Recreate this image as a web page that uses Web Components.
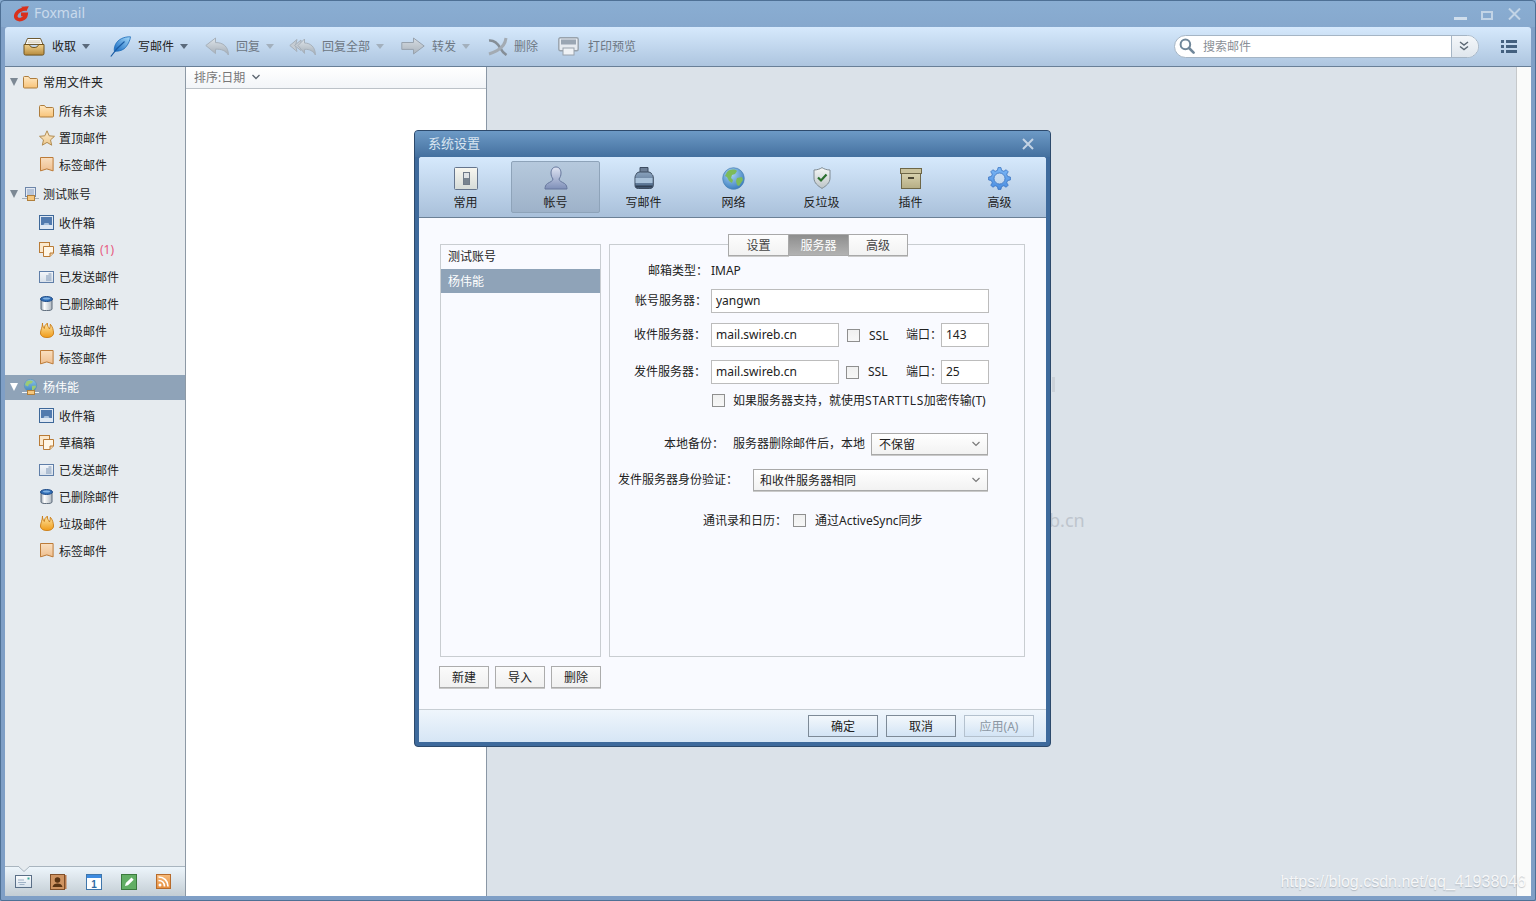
<!DOCTYPE html>
<html lang="zh-CN">
<head>
<meta charset="utf-8">
<title>Foxmail</title>
<style>
  html, body { margin: 0; padding: 0; overflow: hidden; background: #7f9fc6; }
  body { font: 12px "Noto Sans", "Noto Sans CJK SC", sans-serif; color: #222; }
</style>
</head>
<body>

<fm-window>
  <fm-titlebar slot="title">Foxmail</fm-titlebar>

  <fm-toolbar slot="toolbar">
    <fm-tool icon="inbox" caret style="margin-left:18px">收取</fm-tool>
    <fm-tool icon="feather" caret style="margin-left:20px">写邮件</fm-tool>
    <fm-tool icon="reply" caret off style="margin-left:17px">回复</fm-tool>
    <fm-tool icon="replyall" caret off gap="6" style="margin-left:15px">回复全部</fm-tool>
    <fm-tool icon="forward" caret off style="margin-left:17px">转发</fm-tool>
    <fm-tool icon="del" off gap="6" style="margin-left:18px">删除</fm-tool>
    <fm-tool icon="print" off gap="9" style="margin-left:20px">打印预览</fm-tool>
    <fm-search>搜索邮件</fm-search>
  </fm-toolbar>

  <fm-sidebar slot="sidebar">
    <fm-tree-item head icon="folder">常用文件夹</fm-tree-item>
    <fm-tree-item icon="folder">所有未读</fm-tree-item>
    <fm-tree-item icon="star">置顶邮件</fm-tree-item>
    <fm-tree-item icon="tag">标签邮件</fm-tree-item>
    <fm-tree-item head icon="acct">测试账号</fm-tree-item>
    <fm-tree-item icon="inboxb">收件箱</fm-tree-item>
    <fm-tree-item icon="drafts" badge="(1)">草稿箱</fm-tree-item>
    <fm-tree-item icon="sent">已发送邮件</fm-tree-item>
    <fm-tree-item icon="trash">已删除邮件</fm-tree-item>
    <fm-tree-item icon="flame">垃圾邮件</fm-tree-item>
    <fm-tree-item icon="tag">标签邮件</fm-tree-item>
    <fm-tree-item head selected icon="acctglobe">杨伟能</fm-tree-item>
    <fm-tree-item icon="inboxb">收件箱</fm-tree-item>
    <fm-tree-item icon="drafts">草稿箱</fm-tree-item>
    <fm-tree-item icon="sent">已发送邮件</fm-tree-item>
    <fm-tree-item icon="trash">已删除邮件</fm-tree-item>
    <fm-tree-item icon="flame">垃圾邮件</fm-tree-item>
    <fm-tree-item icon="tag">标签邮件</fm-tree-item>
  </fm-sidebar>

  <fm-listpane slot="list">排序:日期</fm-listpane>
  <fm-msgpane slot="msg"></fm-msgpane>

  <fm-dialog slot="overlay" heading="系统设置">
    <fm-settings-tab slot="tabs" icon="switch">常用</fm-settings-tab>
    <fm-settings-tab slot="tabs" icon="person" selected>帐号</fm-settings-tab>
    <fm-settings-tab slot="tabs" icon="ink">写邮件</fm-settings-tab>
    <fm-settings-tab slot="tabs" icon="globe" style="padding-right:0">网络</fm-settings-tab>
    <fm-settings-tab slot="tabs" icon="shield">反垃圾</fm-settings-tab>
    <fm-settings-tab slot="tabs" icon="box">插件</fm-settings-tab>
    <fm-settings-tab slot="tabs" icon="gear">高级</fm-settings-tab>

    <fm-account-list slot="accounts">
      <fm-account>测试账号</fm-account>
      <fm-account selected>杨伟能</fm-account>
    </fm-account-list>

    <fm-button slot="acctbtn">新建</fm-button>
    <fm-button slot="acctbtn">导入</fm-button>
    <fm-button slot="acctbtn">删除</fm-button>

    <fm-panel slot="panel">
      <fm-subtab slot="tabs">设置</fm-subtab>
      <fm-subtab slot="tabs" selected>服务器</fm-subtab>
      <fm-subtab slot="tabs" style="width:60px">高级</fm-subtab>

      <fm-row style="height:22px;margin-top:4px">
        <fm-label style="width:98px">邮箱类型：</fm-label>
        <fm-text style="margin-left:3px">IMAP</fm-text>
      </fm-row>
      <fm-row style="margin-top:7px">
        <fm-label style="width:97px">帐号服务器：</fm-label>
        <fm-input style="margin-left:4px;width:278px">yangwn</fm-input>
      </fm-row>
      <fm-row style="margin-top:10px">
        <fm-label style="width:96px">收件服务器：</fm-label>
        <fm-input style="margin-left:5px;width:128px">mail.swireb.cn</fm-input>
        <fm-check style="margin-left:8px"></fm-check>
        <fm-text style="margin-left:9px;width:37px;padding-bottom:0">SSL</fm-text>
        <fm-text style="width:35px">端口：</fm-text>
        <fm-input style="width:48px">143</fm-input>
      </fm-row>
      <fm-row style="margin-top:13px">
        <fm-label style="width:96px">发件服务器：</fm-label>
        <fm-input style="margin-left:5px;width:128px">mail.swireb.cn</fm-input>
        <fm-check style="margin-left:7px"></fm-check>
        <fm-text style="margin-left:9px;width:38px">SSL</fm-text>
        <fm-text style="width:35px">端口：</fm-text>
        <fm-input style="width:48px">25</fm-input>
      </fm-row>
      <fm-row style="height:19px;margin-top:7px;padding-left:102px">
        <fm-check></fm-check>
        <fm-text style="margin-left:8px">如果服务器支持，就使用<span style="letter-spacing:.6px">STARTTLS</span>加密传输(T)</fm-text>
      </fm-row>
      <fm-row style="height:22px;margin-top:23px">
        <fm-label style="width:114px">本地备份：</fm-label>
        <fm-text style="margin-left:9px">服务器删除邮件后，本地</fm-text>
        <fm-select style="margin-left:6px;width:117px">不保留</fm-select>
      </fm-row>
      <fm-row style="height:22px;margin-top:14px;padding-left:8px">
        <fm-text>发件服务器身份验证：</fm-text>
        <fm-select style="margin-left:15px;width:235px;padding-left:6px">和收件服务器相同</fm-select>
      </fm-row>
      <fm-row style="height:21px;margin-top:19px;padding-left:93px">
        <fm-text>通讯录和日历：</fm-text>
        <fm-check style="margin-left:6px"></fm-check>
        <fm-text style="margin-left:9px">通过ActiveSync同步</fm-text>
      </fm-row>
    </fm-panel>

    <fm-button slot="footer" kind="foot">确定</fm-button>
    <fm-button slot="footer" kind="foot">取消</fm-button>
    <fm-button slot="footer" kind="foot" off>应用(A)</fm-button>
  </fm-dialog>

  <fm-watermark slot="overlay">https://blog.csdn.net/qq_41938046</fm-watermark>
</fm-window>

<script>
(function () {

    function gearPath(cx, cy, ro, ri, n) {
        let d = '';
        for (let i = 0; i < n; i++) {
            let a = i / n * Math.PI * 2;
            let s = Math.PI / n;
            let pts = [[ri, a - s * 0.62], [ro, a - s * 0.34], [ro, a + s * 0.34], [ri, a + s * 0.62]];
            pts.forEach(function (p) {
                let x = cx + p[0] * Math.sin(p[1]);
                let y = cy - p[0] * Math.cos(p[1]);
                d += (d ? 'L' : 'M') + x.toFixed(2) + ' ' + y.toFixed(2);
            });
        }
        return d + 'Z';
    }

    function grad(id, a, b) {
        return '<linearGradient id="' + id + '" x1="0" y1="0" x2="0" y2="1"><stop offset="0" stop-color="' + a + '"/><stop offset="1" stop-color="' + b + '"/></linearGradient>';
    }

    // name: [width, height, svg content]
    // gradient ids must differ between icons that end up in the same shadow root
    const ICONS = {
        logo: [16, 16, '<path d="M13.5 2.600C9 3 3.800 5.200 2.800 9.400 2.200 13 5.600 14.200 8.600 13.300 11.400 12.400 12.800 10.600 13.100 8.400H8" fill="none" stroke="#d9301c" stroke-width="3.600"/><path d="M8 .8L15.800 .2 13.500 5z" fill="#d9301c"/>'],
        inbox: [22, 19, '<defs>' + grad('a', '#f2d28e', '#b58a3d') + '</defs><path d="M4.5 1.5h13l2.5 6h-18z" fill="#fff" stroke="#6d5a33"/><path d="M5 4h12M4.5 5.8h13" stroke="#cfc6ae"/><path d="M1 7.5h5.5c.5 2 1.5 3 4.5 3s4-1 4.5-3H21v9a1.6 1.6 0 0 1-1.6 1.6H2.6A1.6 1.6 0 0 1 1 16.5z" fill="url(#a)" stroke="#6f531d"/>'],
        feather: [21, 21, '<defs><linearGradient id="a" x1="1" y1="0" x2="0" y2="1"><stop offset="0" stop-color="#a8dcfb"/><stop offset="1" stop-color="#1468c0"/></linearGradient></defs><path d="M20.5.8C14 .6 8 3.2 5.4 8.6 4.4 10.8 4 13 4.4 15.2 9 15.6 13.8 14 16.4 10.4 18.6 7.4 20 4.2 20.5.8z" fill="url(#a)" stroke="#1c6bb8" stroke-width=".8"/><path d="M.8 20.5C4 16 9 10 14.5 5.5" fill="none" stroke="#1a5ca3" stroke-width="1.2"/>'],
        reply: [24, 19, '<defs>' + grad('a', '#dfe5ea', '#a2acb6') + '</defs><path d="M.8 8.5L10.5 1v4.6C18 5.4 23.4 9.6 23.4 18 20.6 13.6 16.8 12 10.5 12.2v4.4z" fill="url(#a)" stroke="#a6b0ba"/>'],
        replyall: [27, 19, '<defs>' + grad('a', '#dfe5ea', '#a2acb6') + '</defs><path d="M.8 8.5L8 2.5 6.5 8.5 8 14.5z" fill="#c5ccd3" stroke="#a6b0ba"/><path d="M5.5 8.5L12 3v10.5z" fill="#c5ccd3" stroke="#a6b0ba"/><path d="M9 8.5L15.5 2v4C21.5 6 26.4 10 26.4 18 24 14 20.8 12 15.5 12.4v4z" fill="url(#a)" stroke="#a6b0ba"/>'],
        forward: [24, 19, '<defs>' + grad('a', '#d6dce2', '#aab3bc') + '</defs><path d="M.8 5.5H12.5V1L23.2 9 12.5 17v-4.6H.8z" fill="url(#a)" stroke="#98a3ae"/>'],
        del: [20, 19, '<path d="M1 3.5C6 3 10 7 12.2 11 13.4 13.4 15.5 16 18.5 18" fill="none" stroke="#858e97" stroke-width="2.6"/><path d="M18 1C17.4 6 14 11 9 13.6 6.4 15 4 16 1 17" fill="none" stroke="#a3abb3" stroke-width="3"/>'],
        print: [21, 19, '<rect x=".8" y=".8" width="19.4" height="13" rx="1.5" fill="#e6ebf0" stroke="#98a2ac" stroke-width="1.4"/><rect x="3" y="2.5" width="15" height="5" fill="#9aa6b3"/><rect x="5" y="11" width="11" height="7" fill="#eff2f5" stroke="#98a2ac"/>'],
        search: [16, 16, '<circle cx="6.4" cy="6.4" r="4.8" fill="none" stroke="#70879a" stroke-width="2"/><path d="M10 10l4.6 4.6" stroke="#70879a" stroke-width="2.6" stroke-linecap="round"/>'],
        chev2: [10, 10, '<path d="M1 1l4 3 4-3M1 5.5l4 3 4-3" fill="none" stroke="#5b6773" stroke-width="1.4"/>'],
        list: [16, 13, '<path d="M0 0h3v3H0zM5 0h11v3H5zM0 5h3v3H0zM5 5h11v3H5zM0 10h3v3H0zM5 10h11v3H5z" fill="#43607f"/>'],
        folder: [15, 14, '<defs>' + grad('a', '#ffe8c2', '#f8c378') + '</defs><path d="M.5 2.5a1 1 0 0 1 1-1h4l1.5 2h6.5a1 1 0 0 1 1 1v7.5a1 1 0 0 1-1 1h-12a1 1 0 0 1-1-1z" fill="url(#a)" stroke="#ad7d3d"/>'],
        star: [16, 16, '<defs>' + grad('a', '#fbeacb', '#eec98e') + '</defs><path d="M8 .8l2.2 5 5.3.5-4 3.6 1.2 5.3L8 12.4l-4.7 2.8 1.2-5.3-4-3.6 5.3-.5z" fill="url(#a)" stroke="#b18c52"/>'],
        tag: [14, 15, '<defs>' + grad('a', '#f9dfc0', '#efbf8f') + '</defs><path d="M.5.5h12.6v13.4l-6.3-2-6.3 2z" fill="url(#a)" stroke="#bc7b38"/>'],
        acct: [17, 14, '<rect x="3.5" y=".5" width="10" height="9" fill="#e3e9f3" stroke="#6e86a9"/><path d="M5 3h7M5 5h7M5 7h7" stroke="#8aa0bf"/><path d="M0 11.5h17" stroke="#a7b0ba"/><rect x="5.5" y="8.5" width="7" height="5" fill="#f5c77e" stroke="#b07f3c"/>'],
        acctglobe: [17, 16, '<defs>' + grad('a', '#8cc3e8', '#3f83bb') + '</defs><circle cx="8.5" cy="6.500" r="6.200" fill="url(#a)" stroke="#5f8fae" stroke-width=".6"/><path d="M4.500 2.500c2.500-1.500 5-1.500 6.500 0l-1.500 2-2.500.5-1 2.500-3-1.500zM10 7l3.500-.5.5 1.500-2.500 3H10z" fill="#9ccb74"/><path d="M0 13.500h17" stroke="#f2f5f7"/><rect x="5.500" y="11.500" width="7" height="4" fill="#f5c77e" stroke="#b07f3c"/>'],
        inboxb: [15, 15, '<rect x=".5" y=".5" width="14" height="14" fill="#dfe8f3" stroke="#3e6899"/><rect x="2" y="2" width="11" height="8" fill="#517aae"/><path d="M4.500 10l1-2h4l1 2z" fill="#a6c0de"/>'],
        drafts: [15, 15, '<rect x=".5" y=".5" width="10" height="10" fill="#fbe8cc" stroke="#b97b36"/><path d="M4.500 4.500h10v6.500l-3.500 3.500h-6.500z" fill="#fff6e6" stroke="#b97b36"/><path d="M11 14.500V11h3.500" fill="#efd0a2" stroke="#b97b36"/>'],
        sent: [15, 12, '<defs>' + grad('a', '#f3f6fa', '#d7e0ea') + '</defs><rect x=".5" y=".5" width="14" height="11" fill="url(#a)" stroke="#5f7ea8"/><path d="M7 5h5.500M7 7h5.500M7 9h5.500M9.500 3h3" stroke="#7d95b5"/>'],
        trash: [13, 15, '<defs><linearGradient id="a" x1="0" y1="0" x2="1" y2="0"><stop offset="0" stop-color="#9aa6b2"/><stop offset=".3" stop-color="#fff"/><stop offset="1" stop-color="#aeb7c0"/></linearGradient></defs><path d="M1 3v10c0 1 2 1.600 5.500 1.600S12 14 12 13V3z" fill="url(#a)" stroke="#5a6878"/><ellipse cx="6.500" cy="3" rx="6" ry="2.500" fill="#3370b8" stroke="#1f4c88"/><ellipse cx="6.500" cy="2.600" rx="3.500" ry="1" fill="#82b3e3"/>'],
        flame: [14, 15, '<defs>' + grad('a', '#ffe9a8', '#ef9a18') + '</defs><path d="M2.500 0c-.2 2.500.8 4 1.800 5.500C4.500 3.500 5 1.500 7.500.2 7 3 8.500 4 9.500 6c.5-1.500 1-3 .8-4.800C12.500 3.500 13.500 7 13.500 10c0 3-3 4.600-6.500 4.600S.5 13 .5 10C.5 7 2.500 4.500 2.500 0z" fill="url(#a)" stroke="#c97a13" stroke-width=".9"/>'],
        mail: [17, 13, '<defs>' + grad('m', '#fbfdfe', '#d8e2ec') + '</defs><rect x=".5" y=".5" width="16" height="12" fill="url(#m)" stroke="#5a6f87"/><path d="M3 5h6M3 7.500h8M4.500 9.500h5" stroke="#9fb2c6"/><rect x="12.500" y="2.500" width="2" height="2" fill="#3ba89a"/>'],
        contacts: [17, 16, '<rect x="14" y="1" width="2.500" height="14" fill="#b9794a"/><rect x=".5" y=".5" width="14" height="15" fill="#cf9462" stroke="#7f4f2a"/><circle cx="7.500" cy="6" r="2.800" fill="#5a3413"/><path d="M2.500 13c.5-2.500 2.500-3.500 5-3.500s4.500 1 5 3.500z" fill="#5a3413"/>'],
        calendar: [16, 16, '<rect x=".5" y=".5" width="15" height="15" fill="#fdfeff" stroke="#3f76ab"/><rect x="1" y="1" width="14" height="3" fill="#3d8be0"/><text x="8" y="14" font-family="Liberation Sans" font-weight="700" font-size="10" text-anchor="middle" fill="#2c6aa3">1</text>'],
        notes: [16, 16, '<rect x=".5" y=".5" width="15" height="15" fill="#62ae64" stroke="#3b793d"/><path d="M4 12l.8-3 5.700-5.500 2.200 2.200-5.700 5.500z" fill="#fff"/>'],
        rss: [15, 15, '<defs>' + grad('r', '#f7bb7b', '#e48c3c') + '</defs><rect x=".5" y=".5" width="14" height="14" fill="url(#r)" stroke="#b66b2c"/><circle cx="4" cy="11" r="1.500" fill="#fff"/><path d="M2.500 6.500c3.500 0 6 2.500 6 6M2.500 3c5.500 0 9.500 4 9.500 9.500" fill="none" stroke="#fff" stroke-width="1.700"/>'],
        'switch': [24, 23, '<defs>' + grad('a', '#f8f7f0', '#d5dbd8') + '</defs><rect x=".5" y=".5" width="23" height="22" rx="1" fill="url(#a)" stroke="#65758d"/><rect x="9.500" y="5.500" width="6" height="12" fill="#dfe3e6" stroke="#6f7a88"/><rect x="10" y="11" width="5" height="6" fill="#77838f"/>'],
        person: [24, 24, '<defs>' + grad('a', '#dfe4f3', '#7e8fb8') + '</defs><path d="M12 1C8.500 1 7 4 7 7c0 3 1 4.500 2 6 0 2-3 3-5.500 4.500C1.500 18.800 1 21 1 23h22c0-2-.5-4.200-2.500-5.500C18 16 15 15 15 13c1-1.500 2-3 2-6 0-3-1.500-6-5-6z" fill="url(#a)" stroke="#66779c"/>'],
        ink: [20, 24, '<defs>' + grad('a', '#8aa2bd', '#4d6888') + '</defs><path d="M6 1.500h8v5H6z" fill="#6d7f96" stroke="#3d4c60"/><path d="M2.500 8c0-1.500 2-2 4-2h7c2 0 4 .5 4 2 1.300 1 1.800 2 1.800 4v7c0 2.500-1.500 3.500-3.500 3.500H4.500C2.200 22.500 1 21.500 1 19v-7c0-2 .5-3 1.500-4z" fill="url(#a)" stroke="#3d4c60"/><path d="M1.500 12h17v5h-17z" fill="#a9c2da"/><path d="M1.500 20.500h17" stroke="#2f3e52" stroke-width="2"/>'],
        globe: [23, 23, '<defs><radialGradient id="a" cx=".4" cy=".3" r=".8"><stop offset="0" stop-color="#a9d4f5"/><stop offset="1" stop-color="#2f74b8"/></radialGradient></defs><circle cx="11.500" cy="11.500" r="10.800" fill="url(#a)" stroke="#4d84b3" stroke-width=".7"/><path d="M5 5c3-3 8-3 10-1l-2 3-3 1-1 3 2 2-1 3-3-2-2-4-2-1zM15 11l5-1 1 3-4 6-2-1-1-4z" fill="#7dbb5a"/>'],
        shield: [18, 22, '<defs>' + grad('a', '#f6f8f6', '#bcc4c7') + '</defs><path d="M9 .6C7 2 4 3 1 3v8c0 5 4 8 8 10.400 4-2.400 8-5.400 8-10.400V3c-3 0-6-1-8-2.400z" fill="url(#a)" stroke="#7e8a92"/><path d="M5 10.500l3 3 5.500-6" fill="none" stroke="#2b6f2d" stroke-width="2.200"/>'],
        box: [22, 21, '<defs>' + grad('a', '#d8d2ae', '#b5ad84') + '</defs><rect x="1.500" y="5.500" width="19" height="15" fill="url(#a)" stroke="#6e6747"/><rect x=".5" y=".5" width="21" height="5" fill="#c9c29c" stroke="#6e6747"/><rect x="8" y="9" width="6" height="2" fill="#4b4632"/>'],
        gear: [23, 23, '<defs>' + grad('a', '#7db8f6', '#4a8de0') + '</defs><path fill-rule="evenodd" d="' + gearPath(11.5, 11.5, 11, 8.4, 8) + 'M11.500 6a5.500 5.500 0 1 0 0 11 5.500 5.500 0 0 0 0-11z" fill="url(#a)" stroke="#3a73c2" stroke-width=".8"/>']
    };

    function icon(name) {
        let i = ICONS[name];
        return '<svg xmlns="http://www.w3.org/2000/svg" width="' + i[0] + '" height="' + i[1] + '" viewBox="0 0 ' + i[0] + ' ' + i[1] + '" style="display:block;flex:none">' + i[2] + '</svg>';
    }

    class FmWindow extends HTMLElement {
        constructor() {
            super();
            this.attachShadow({ mode: 'open' }).innerHTML = `
            <style>
                :host { display: flex; flex-direction: column; position: relative; width: 1536px; height: 901px;
                    box-sizing: border-box; padding: 0 5px 5px; overflow: hidden;
                    background: linear-gradient(#8aaed3 0, #86a8cd 27px, #7f9fc6 27px); }
                .edge { position: absolute; inset: 0; border: 1px solid #4e7095; border-radius: 4px 4px 2px 2px; pointer-events: none; }
                .main { flex: 1; display: flex; min-height: 0; }
            </style>
            <div class="edge"></div>
            <slot name="title"></slot>
            <slot name="toolbar"></slot>
            <div class="main"><slot name="sidebar"></slot><slot name="list"></slot><slot name="msg"></slot></div>
            <slot name="overlay"></slot>`;
        }
    }

    class FmTitlebar extends HTMLElement {
        constructor() {
            super();
            this.attachShadow({ mode: 'open' }).innerHTML = `
            <style>
                :host { display: flex; align-items: center; height: 27px; margin: 0 -5px; padding: 0 15px 0 13px; box-sizing: border-box;
                    color: #c9daec; font-size: 14px; }
                .t { margin-left: 5px; flex: 1; position: relative; top: -1px; }
                .b { display: flex; align-items: flex-end; gap: 14px; height: 12px; margin-top: 1px; }
            </style>
            ${icon('logo')}
            <div class="t"><slot></slot></div>
            <div class="b">
                <svg width="13" height="12" viewBox="0 0 13 12"><path d="M0 9h13v3H0z" fill="#d0deec"/></svg>
                <svg width="13" height="12" viewBox="0 0 13 12"><path d="M1 4h10v7H1z" fill="none" stroke="#c2d4e6" stroke-width="2"/></svg>
                <svg width="13" height="12" viewBox="0 0 13 12"><path d="M1 .5l11 11M12 .5l-11 11" fill="none" stroke="#c2d4e6" stroke-width="2"/></svg>
            </div>`;
        }
    }

    class FmToolbar extends HTMLElement {
        constructor() {
            super();
            this.attachShadow({ mode: 'open' }).innerHTML = `
            <style>
                :host { display: flex; align-items: center; height: 40px; box-sizing: border-box; padding-bottom: 1px;
                    background: linear-gradient(#d6e9fc, #adc5df); border-bottom: 1px solid #687f97; border-radius: 3px 3px 0 0; }
            </style>
            <slot></slot>`;
        }
    }

    class FmTool extends HTMLElement {
        constructor() {
            super();
            let off = this.hasAttribute('off');
            let gap = this.getAttribute('gap') || 7;
            this.attachShadow({ mode: 'open' }).innerHTML = `
            <style>
                :host { display: flex; align-items: center; color: ${off ? '#6d7783' : '#222'}; flex: none; }
                .l { margin-left: ${gap}px; }
                .c { width: 0; height: 0; margin-left: 6px; margin-top: 1px; border: 4px solid transparent; border-bottom: 0; border-top: 5px solid ${off ? '#a3b0bd' : '#5a6a7c'}; }
            </style>
            ${icon(this.getAttribute('icon'))}
            <span class="l"><slot></slot></span>
            ${this.hasAttribute('caret') ? '<span class="c"></span>' : ''}`;
        }
    }

    class FmSearch extends HTMLElement {
        constructor() {
            super();
            this.attachShadow({ mode: 'open' }).innerHTML = `
            <style>
                :host { display: flex; margin-left: auto; margin-right: 14px; height: 23px; align-items: stretch; }
                .box { display: flex; align-items: stretch; width: 305px; height: 23px; box-sizing: border-box; background: #fff;
                    border: 1px solid #a5b5c5; border-radius: 12px; overflow: hidden; color: #8a8f96; }
                .i { display: flex; align-items: center; padding-left: 4px; }
                .t { flex: 1; padding-left: 8px; line-height: 22px; }
                .d { width: 27px; display: flex; align-items: center; justify-content: center; border-left: 1px solid #a5b5c5;
                    background: linear-gradient(#f4f7fa, #dfe6ed); padding-right: 2px; box-sizing: border-box; }
                .m { align-self: center; margin-left: 22px; }
            </style>
            <div class="box">
                <div class="i">${icon('search')}</div>
                <div class="t"><slot></slot></div>
                <div class="d">${icon('chev2')}</div>
            </div>
            <div class="m">${icon('list')}</div>`;
        }
    }

    class FmSidebar extends HTMLElement {
        constructor() {
            super();
            this.attachShadow({ mode: 'open' }).innerHTML = `
            <style>
                :host { display: flex; flex-direction: column; width: 181px; flex: none; box-sizing: border-box; background: #e6ebef; border-right: 1px solid #8d99a5; }
                .tree { flex: 1; }
                .bottom { position: relative; display: flex; height: 30px; box-sizing: border-box; align-items: center; border-top: 1px solid #a9b5bf;
                    background: linear-gradient(#edf5fb, #c3cdd4); padding-left: 5px; }
                .bottom span { display: flex; justify-content: center; width: 35px; flex: none; margin-left: -4px; margin-right: 4px; }
                .notch { position: absolute; left: 13px; top: -1px; }
            </style>
            <div class="tree"><slot></slot></div>
            <div class="bottom">
                <svg class="notch" width="12" height="6" viewBox="0 0 12 6"><path d="M0 0l6 5.500L12 0" fill="#e6ebef" stroke="#a9b5bf"/></svg>
                <span>${icon('mail')}</span><span>${icon('contacts')}</span><span>${icon('calendar')}</span><span>${icon('notes')}</span><span>${icon('rss')}</span>
            </div>`;
        }
    }

    class FmTreeItem extends HTMLElement {
        constructor() {
            super();
            let head = this.hasAttribute('head');
            let sel = this.hasAttribute('selected');
            let badge = this.getAttribute('badge');
            this.attachShadow({ mode: 'open' }).innerHTML = `
            <style>
                :host { display: flex; align-items: center; box-sizing: border-box;
                    height: ${head ? 25 : 27}px; margin: ${head ? '3px 0' : '0'}; padding: 0 0 2px ${head ? 5 : 34}px;
                    ${sel ? 'background:#8fa3b8;color:#fff;' : ''} }
                .tri { width: 0; height: 0; margin-right: 5px; border: 4.5px solid transparent; border-bottom: 0; border-top: 8px solid ${sel ? '#fff' : '#7c8894'}; }
                .ic { display: flex; justify-content: center; align-items: center; width: 15px; height: 16px; margin-right: 5px; }
                .bd { color: #e6597f; margin-left: 5px; }
            </style>
            ${head ? '<span class="tri"></span>' : ''}
            <span class="ic">${icon(this.getAttribute('icon'))}</span>
            <span><slot></slot></span>
            ${badge ? '<span class="bd">' + badge + '</span>' : ''}`;
        }
    }

    class FmListpane extends HTMLElement {
        constructor() {
            super();
            this.attachShadow({ mode: 'open' }).innerHTML = `
            <style>
                :host { display: block; width: 301px; flex: none; box-sizing: border-box; background: #fff; border-right: 1px solid #8a97a5; color: #777; }
                .h { display: flex; align-items: center; height: 22px; box-sizing: border-box; padding: 0 0 2px 8px;
                    background: linear-gradient(#fff, #f2f5f8); border-bottom: 1px solid #bcc2c8; }
                svg { margin-left: 7px; }
            </style>
            <div class="h"><slot></slot>
                <svg width="8" height="6" viewBox="0 0 8 6"><path d="M.5 1l3.500 3.500L7.500 1" fill="none" stroke="#5d6670" stroke-width="1.300"/></svg>
            </div>`;
        }
    }

    class FmMsgpane extends HTMLElement {
        constructor() {
            super();
            this.attachShadow({ mode: 'open' }).innerHTML = `
            <style>
                :host { display: flex; flex: 1; min-width: 0; }
                .m { position: relative; flex: 1; background: #dbe2e9; }
                .s { width: 15px; flex: none; box-sizing: border-box; background: #fafbfa; border-left: 1px solid #c6c9cb; }
                .g { position: absolute; left: 562px; top: 440px; font-size: 18px; line-height: 26px; color: #bec5cd; }
                .k { position: absolute; left: 565px; top: 310px; width: 3px; height: 15px; background: #ccd2d9; }
            </style>
            <div class="m"><span class="g">b.cn</span><span class="k"></span></div>
            <div class="s"></div>`;
        }
    }

    class FmDialog extends HTMLElement {
        constructor() {
            super();
            this.attachShadow({ mode: 'open' }).innerHTML = `
            <style>
                :host { position: absolute; left: 414px; top: 130px; width: 637px; height: 617px; box-sizing: border-box; display: flex; flex-direction: column;
                    background: #3e6a9c; border: 1px solid #2d4a6c; border-radius: 4px; overflow: hidden; }
                .title { display: flex; align-items: center; justify-content: space-between; height: 26px; padding: 0 16px 0 13px; flex: none;
                    background: linear-gradient(#6d9ac6, #44709f); color: #d8e5f1; font-size: 13px; }
                .title span { position: relative; top: -2px; }
                .inner { flex: 1; display: flex; flex-direction: column; margin: 0 4px 4px; border-radius: 3px 3px 0 0; overflow: hidden; background: #f9faff; min-height: 0; }
                .tabs { display: flex; height: 61px; box-sizing: border-box; padding: 4px 0 0 3px; flex: none;
                    background: linear-gradient(#d6e9fc, #a9c0da); border-bottom: 1px solid #6b8096; }
                .body { flex: 1; display: grid; grid-template-columns: 161px 416px; column-gap: 8px; grid-template-rows: 413px 22px; row-gap: 9px;
                    padding: 26px 0 0 21px; min-height: 0; }
                .btns { display: flex; gap: 6px; margin-left: -1px; }
                .foot { display: flex; align-items: center; justify-content: flex-end; gap: 8px; height: 33px; box-sizing: border-box; padding-right: 12px; flex: none;
                    border-top: 1px solid #c8ced4; background: linear-gradient(#eff6fc, #d6e6f5); }
            </style>
            <div class="title"><span>${this.getAttribute('heading')}</span>
                <svg width="12" height="12" viewBox="0 0 12 12"><path d="M1 1l10 10M11 1L1 11" fill="none" stroke="#c3d3e4" stroke-width="2"/></svg>
            </div>
            <div class="inner">
                <div class="tabs"><slot name="tabs"></slot></div>
                <div class="body">
                    <slot name="accounts"></slot>
                    <slot name="panel"></slot>
                    <div class="btns"><slot name="acctbtn"></slot></div>
                </div>
                <div class="foot"><slot name="footer"></slot></div>
            </div>`;
        }
    }

    class FmSettingsTab extends HTMLElement {
        constructor() {
            super();
            let sel = this.hasAttribute('selected');
            this.attachShadow({ mode: 'open' }).innerHTML = `
            <style>
                :host { display: flex; flex-direction: column; align-items: center; width: 89px; height: 52px; box-sizing: border-box; flex: none;
                    padding: 4px ${sel ? 0 : 2}px 0 0; border: 1px solid transparent; border-radius: 2px;
                    ${sel ? 'background:linear-gradient(#b6c9dd,#9eb2c9);border-color:#8ea3b9;' : ''} }
                .i { display: flex; align-items: center; justify-content: center; height: 24px; }
                .l { line-height: 14px; margin-top: 6px; }
            </style>
            <div class="i">${icon(this.getAttribute('icon'))}</div>
            <div class="l"><slot></slot></div>`;
        }
    }

    class FmAccountList extends HTMLElement {
        constructor() {
            super();
            this.attachShadow({ mode: 'open' }).innerHTML = `
            <style>
                :host { display: block; box-sizing: border-box; border: 1px solid #c9cdd1; }
            </style>
            <slot></slot>`;
        }
    }

    class FmAccount extends HTMLElement {
        constructor() {
            super();
            let sel = this.hasAttribute('selected');
            this.attachShadow({ mode: 'open' }).innerHTML = `
            <style>
                :host { display: block; height: 24px; line-height: ${sel ? 25 : 23}px; padding-left: 7px; ${sel ? 'background:#8fa3b8;color:#fff;' : ''} }
            </style>
            <slot></slot>`;
        }
    }

    class FmButton extends HTMLElement {
        constructor() {
            super();
            let foot = this.getAttribute('kind') === 'foot';
            let off = this.hasAttribute('off');
            let look = foot
                ? 'width:70px;background:linear-gradient(#f3f8fc,#d3e4f5);border:1px solid ' + (off ? '#b4c1ce' : '#7d8a97') + ';' + (off ? 'color:#8b97a3;' : '')
                : 'width:50px;background:linear-gradient(#fbfbfb,#f0f0f0);border:1px solid #acacac;box-shadow:0 1px 0 #c8c8c8;';
            this.attachShadow({ mode: 'open' }).innerHTML = `
            <style>
                :host { display: flex; align-items: center; justify-content: center; height: 22px; box-sizing: border-box; flex: none; ${look} }
            </style>
            <slot></slot>`;
        }
    }

    class FmPanel extends HTMLElement {
        constructor() {
            super();
            this.attachShadow({ mode: 'open' }).innerHTML = `
            <style>
                :host { display: block; box-sizing: border-box; border: 1px solid #c9cdd1; }
                .tabs { display: flex; margin: -11px 0 0 118px; width: 180px; height: 22px; }
            </style>
            <div class="tabs"><slot name="tabs"></slot></div>
            <slot></slot>`;
        }
    }

    class FmSubtab extends HTMLElement {
        constructor() {
            super();
            let sel = this.hasAttribute('selected');
            this.attachShadow({ mode: 'open' }).innerHTML = `
            <style>
                :host { display: flex; align-items: center; justify-content: center; width: 61px; height: 22px; box-sizing: border-box; flex: none;
                    border: 1px solid #a9a9a9; margin-right: -1px;
                    ${sel ? 'background:linear-gradient(#8e8e8e,#b2b2b2);color:#fff;' : 'background:linear-gradient(#fdfdfd,#f2f2f2);color:#444;box-shadow:0 1px 0 #ccc;'} }
            </style>
            <slot></slot>`;
        }
    }

    class FmRow extends HTMLElement {
        constructor() {
            super();
            this.attachShadow({ mode: 'open' }).innerHTML = `
            <style>
                :host { display: flex; align-items: center; height: 24px; }
            </style>
            <slot></slot>`;
        }
    }

    class FmLabel extends HTMLElement {
        constructor() {
            super();
            this.attachShadow({ mode: 'open' }).innerHTML = `
            <style>
                :host { display: block; text-align: right; white-space: nowrap; flex: none; padding-bottom: 2px; }
            </style>
            <slot></slot>`;
        }
    }

    class FmText extends HTMLElement {
        constructor() {
            super();
            this.attachShadow({ mode: 'open' }).innerHTML = `
            <style>
                :host { display: block; white-space: nowrap; flex: none; padding-bottom: 2px; }
            </style>
            <slot></slot>`;
        }
    }

    class FmInput extends HTMLElement {
        constructor() {
            super();
            this.attachShadow({ mode: 'open' }).innerHTML = `
            <style>
                :host { display: block; height: 24px; line-height: 22px; box-sizing: border-box; padding-left: 4px; flex: none;
                    background: #fff; border: 1px solid #bcbcbc; color: #222; }
            </style>
            <slot></slot>`;
        }
    }

    class FmCheck extends HTMLElement {
        constructor() {
            super();
            this.attachShadow({ mode: 'open' }).innerHTML = `
            <style>
                :host { display: block; width: 13px; height: 13px; box-sizing: border-box; flex: none;
                    background: linear-gradient(#f0f0f0, #f7f7f7); border: 1px solid #8f8f8f; }
            </style>`;
        }
    }

    class FmSelect extends HTMLElement {
        constructor() {
            super();
            this.attachShadow({ mode: 'open' }).innerHTML = `
            <style>
                :host { display: flex; align-items: center; height: 22px; box-sizing: border-box; padding: 0 7px 0 7px; flex: none;
                    background: linear-gradient(#fff, #f2f2f2); border: 1px solid #a9a9a9; box-shadow: 0 1px 0 #c9c9c9; }
                .t { flex: 1; }
            </style>
            <span class="t"><slot></slot></span>
            <svg width="8" height="6" viewBox="0 0 8 6"><path d="M.5 1l3.500 3.500L7.500 1" fill="none" stroke="#7a7a7a" stroke-width="1.200"/></svg>`;
        }
    }

    class FmWatermark extends HTMLElement {
        constructor() {
            super();
            this.attachShadow({ mode: 'open' }).innerHTML = `
            <style>
                :host { position: absolute; right: 10px; top: 871px; font: 16px/21px "Liberation Sans", sans-serif;
                    color: rgba(255,255,255,.85); text-shadow: 0 1px 1px rgba(100,110,120,.35); }
            </style>
            <slot></slot>`;
        }
    }

    customElements.define('fm-window', FmWindow);
    customElements.define('fm-titlebar', FmTitlebar);
    customElements.define('fm-toolbar', FmToolbar);
    customElements.define('fm-tool', FmTool);
    customElements.define('fm-search', FmSearch);
    customElements.define('fm-sidebar', FmSidebar);
    customElements.define('fm-tree-item', FmTreeItem);
    customElements.define('fm-listpane', FmListpane);
    customElements.define('fm-msgpane', FmMsgpane);
    customElements.define('fm-dialog', FmDialog);
    customElements.define('fm-settings-tab', FmSettingsTab);
    customElements.define('fm-account-list', FmAccountList);
    customElements.define('fm-account', FmAccount);
    customElements.define('fm-button', FmButton);
    customElements.define('fm-panel', FmPanel);
    customElements.define('fm-subtab', FmSubtab);
    customElements.define('fm-row', FmRow);
    customElements.define('fm-label', FmLabel);
    customElements.define('fm-text', FmText);
    customElements.define('fm-input', FmInput);
    customElements.define('fm-check', FmCheck);
    customElements.define('fm-select', FmSelect);
    customElements.define('fm-watermark', FmWatermark);

})();
</script>
</body>
</html>
